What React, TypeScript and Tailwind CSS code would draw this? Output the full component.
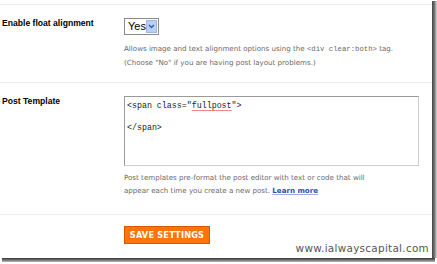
const helpFont = { fontFamily: "Verdana, 'DejaVu Sans', sans-serif" };

const Row = ({
  label,
  children,
  className = "",
}: {
  label: string;
  children: React.ReactNode;
  className?: string;
}) => (
  <div className={`flex border-b border-[#ececec] ${className}`}>
    <div className="w-[124px] shrink-0 pl-[2px] text-[8.6px] font-bold text-black font-['Liberation_Sans']">
      {label}
    </div>
    <div className="flex-1">{children}</div>
  </div>
);

export default function App() {
  return (
    <div className="relative w-[437px] h-[264px] bg-white overflow-hidden" style={helpFont}>
      <div className="flex h-[258px]">
        <div className="flex-1 flex flex-col pt-[4px]">
          <div className="border-t border-[#ececec]" />
          <Row label="Enable float alignment" className="h-[78px] pt-[12px]">
            <div className="flex items-center w-[35px] h-[17px] border border-[#8a8a8a] mt-[1px] pl-[3px] pr-[1px]">
              <span className="flex-1 text-[11px] text-black leading-none font-['Liberation_Sans']">Yes</span>
              <span className="w-[11px] h-[13px] bg-[#b9cff5] border border-[#9db6e6] flex items-center justify-center">
                <svg width="7" height="5" viewBox="0 0 7 5">
                  <path d="M1 1 L3.5 3.5 L6 1" stroke="#3b5aa5" strokeWidth="1.4" fill="none" />
                </svg>
              </span>
            </div>
            <p className="mt-[7px] text-[7.1px] leading-[13px] text-[#6a6a6a]">
              Allows image and text alignment options using the{" "}
              <span className="font-['Liberation_Mono'] text-[7.3px]">&lt;div clear:both&gt;</span> tag.
              <br />
              (Choose "No" if you are having post layout problems.)
            </p>
          </Row>
          <Row label="Post Template" className="h-[132px] pt-[12px]">
            <div className="w-[295px] h-[70px] mt-[1px] border border-[#9a9a9a] border-b-[#cfcfcf] border-r-[#cfcfcf] px-[2px] pt-[3px] font-['Liberation_Mono'] text-[8.3px] leading-[11px] text-[#222]">
              <div>
                &lt;span class="
                <span className="underline decoration-[#e88] underline-offset-2">fullpost</span>"&gt;
              </div>
              <div className="h-[11px]" />
              <div>&lt;/span&gt;</div>
            </div>
            <p className="mt-[5px] text-[7.1px] leading-[13px] text-[#6a6a6a]">
              Post templates pre-format the post editor with text or code that will
              <br />
              appear each time you create a new post.{" "}
              <a className="font-bold text-[#2a4fa8] underline decoration-[#9db0e0]">Learn more</a>
            </p>
          </Row>
          <div className="flex pt-[11px]">
            <div className="w-[124px] shrink-0" />
            <button className="h-[18px] w-[86px] bg-[#ff7408] border border-[#d25a00] text-white text-[8.2px] font-bold tracking-[0.2px]">
              SAVE SETTINGS
            </button>
          </div>
        </div>
        <div className="w-[5px] bg-gradient-to-r from-[#444] via-[#777] to-[#ddd] mt-[1px]" />
      </div>
      <div className="h-[4px] mx-[2px] bg-gradient-to-b from-[#333] to-[#bbb]" />
      <div className="absolute right-[6px] bottom-[8px] bg-white px-[2px] text-[10.4px] leading-[15px] text-[#555] font-['DejaVu_Sans'] tracking-[0.3px]">
        www.ialwayscapital.com
      </div>
    </div>
  );
}
